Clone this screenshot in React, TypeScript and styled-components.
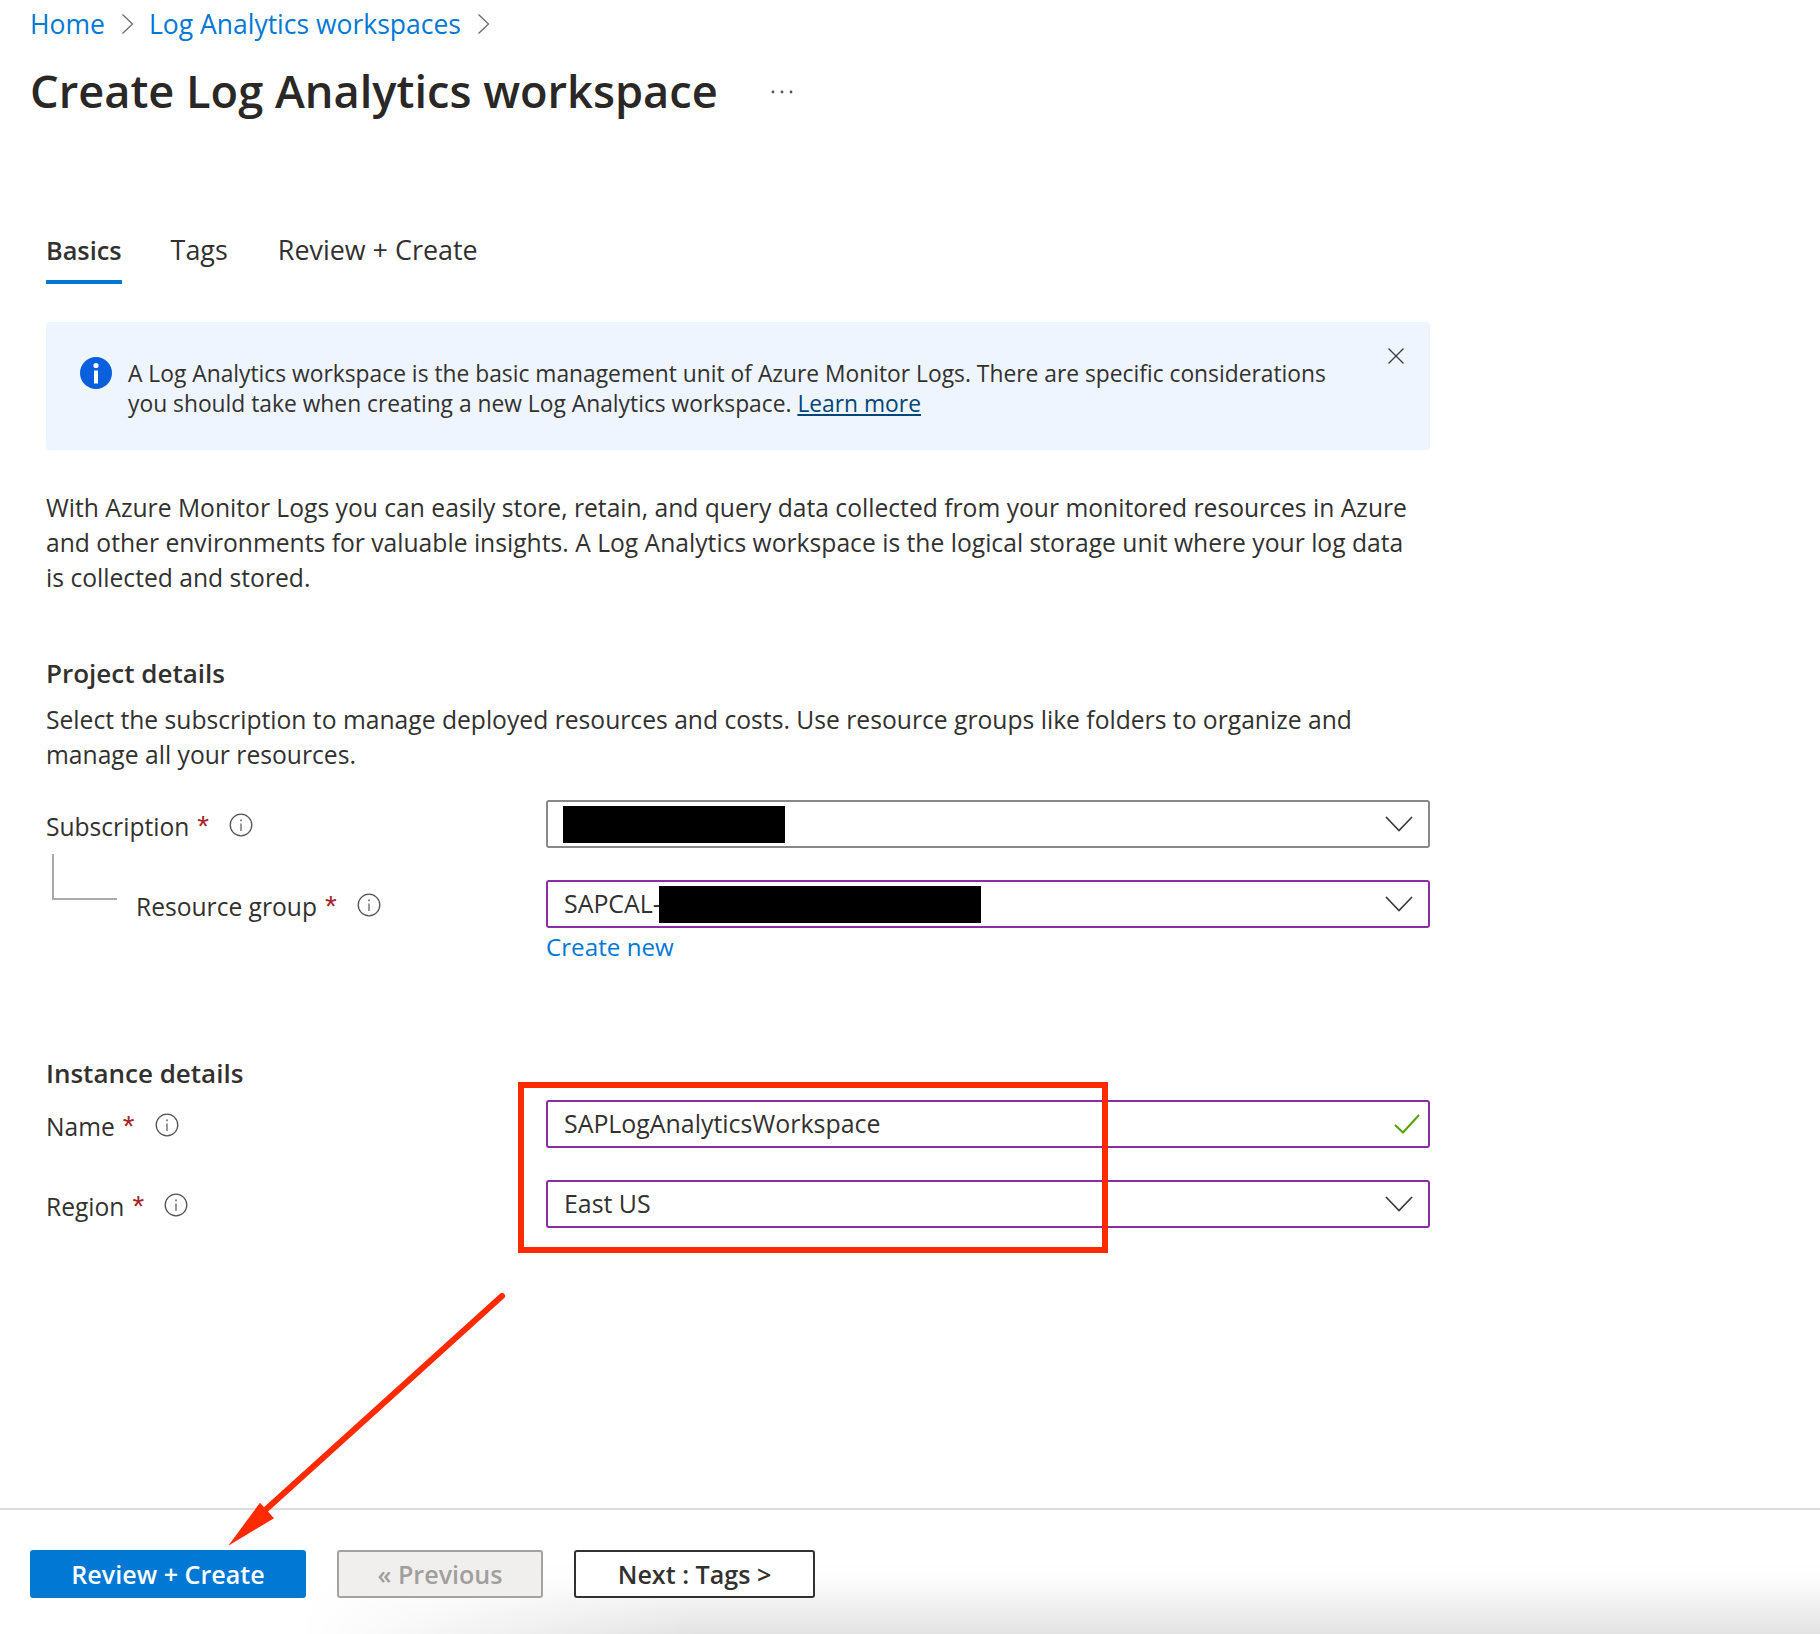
import React from 'react';
import styled, { createGlobalStyle } from 'styled-components';

const GlobalStyle = createGlobalStyle`
  html, body { margin: 0; padding: 0; background: #fff; }
  body { font-family: "Open Sans", "Noto Sans", sans-serif; color: #323130; }
  * { box-sizing: border-box; }
`;

const Page = styled.div`
  position: relative;
  width: 1820px;
  height: 1634px;
  display: flex;
  flex-direction: column;
  overflow: hidden;
  background: #fff;
`;

const Main = styled.main`
  flex: 1;
  min-height: 0;
`;

const Breadcrumbs = styled.nav`
  height: 50px;
  padding: 0 0 2px 30px;
  display: flex;
  align-items: center;
  font-size: 26.5px;
  line-height: 48px;
`;

const CrumbLink = styled.a`
  color: #0078d4;
  white-space: nowrap;
`;

const CrumbSep = styled.svg`
  width: 13px;
  height: 20px;
  margin: 0 15px 0 16px;
  flex: none;
`;

const TitleRow = styled.header`
  height: 84px;
  padding: 0 0 2px 30px;
  display: flex;
  align-items: center;
`;

const Title = styled.h1`
  margin: 0;
  font-size: 45.2px;
  font-weight: 600;
  line-height: 82px;
  color: #292827;
  white-space: nowrap;
`;

const MoreDots = styled.svg`
  width: 24px;
  height: 6px;
  margin: 2px 0 0 52px;
  flex: none;
`;

const Content = styled.div`
  padding-left: 46px;
  width: 1430px;
`;

const Tabs = styled.div`
  margin-top: 88px;
  display: flex;
  gap: 49px;
`;

const Tab = styled.div<{ $active?: boolean }>`
  height: 62px;
  font-size: ${p => (p.$active ? '25.3px' : '26.9px')};
  font-weight: ${p => (p.$active ? 600 : 400)};
  line-height: 56px;
  color: #323130;
  white-space: nowrap;
  border-bottom: 4px solid ${p => (p.$active ? '#0078d4' : 'transparent')};
  &:last-child { margin-left: 1px; }
`;

const Banner = styled.section`
  margin-top: 38px;
  height: 128px;
  background: #eef5ff;
  border-radius: 4px;
  display: flex;
  padding: 35px 26px 0 34px;
`;

const BannerIcon = styled.svg`
  width: 32px;
  height: 32px;
  margin-right: 16px;
  flex: none;
`;

const BannerText = styled.p`
  margin: 2px 0 0;
  flex: 1;
  font-size: 22.8px;
  line-height: 30px;
  color: #323130;
  white-space: nowrap;
`;

const BannerLink = styled.a`
  color: #004578;
  text-decoration: underline;
`;

const CloseIcon = styled.svg`
  width: 16px;
  height: 16px;
  margin-top: -9px;
  flex: none;
`;

const Intro = styled.p`
  margin: 40px 0 0;
  font-size: 24.66px;
  line-height: 35px;
  white-space: nowrap;
`;

const SectionHeading = styled.h2<{ $top: number }>`
  margin: ${p => p.$top}px 0 0;
  font-size: 26px;
  font-weight: 600;
  line-height: 36px;
  color: #323130;
  white-space: nowrap;
`;

const SectionText = styled.p`
  margin: 11px 0 0;
  font-size: 24.66px;
  line-height: 35px;
  white-space: nowrap;
`;

const FormGrid = styled.div<{ $top: number }>`
  margin-top: ${p => p.$top}px;
  display: grid;
  grid-template-columns: 500px 884px;
  row-gap: 32px;
`;

const LabelCell = styled.div`
  height: 48px;
  padding-top: 4px;
  display: flex;
  align-items: center;
  font-size: 24.6px;
  white-space: nowrap;
`;

const Connector = styled.span`
  width: 65px;
  height: 46px;
  margin: -30px 19px 0 6px;
  flex: none;
  align-self: flex-start;
  border-left: 2px solid #ababab;
  border-bottom: 2px solid #ababab;
`;

const Star = styled.span`
  margin: 0 0 0 8px;
  width: 17px;
  color: #a4262c;
  font-size: 30px;
  line-height: 30px;
  font-family: "Liberation Sans", sans-serif;
`;

const InfoIcon = styled.svg`
  width: 24px;
  height: 24px;
  margin: -2px 0 0 15px;
  flex: none;
`;

const FieldCell = styled.div`
  display: flex;
  flex-direction: column;
`;

const Field = styled.div<{ $focused?: boolean }>`
  height: 48px;
  padding: 0 14px 0 16px;
  display: flex;
  align-items: center;
  background: #fff;
  border: 2px solid ${p => (p.$focused ? '#8a2da5' : '#8a8886')};
  border-radius: 3px;
  font-size: 24.9px;
  color: #323130;
  white-space: nowrap;
`;

const FieldValue = styled.span`
  flex: 1;
  display: flex;
  align-items: center;
  min-width: 0;
  padding-bottom: 2px;
`;

const Redaction = styled.span<{ $w: number; $offset: number }>`
  display: block;
  width: ${p => p.$w}px;
  height: 37px;
  margin-bottom: -2px;
  margin-left: ${p => p.$offset}px;
  background: #000;
  flex: none;
`;

const Chevron = styled.svg`
  width: 28px;
  height: 16px;
  margin-right: 1px;
  flex: none;
`;

const CheckMark = styled.svg`
  width: 26px;
  height: 20px;
  margin-right: -6px;
  flex: none;
`;

const CreateNew = styled.a`
  margin-top: 4px;
  height: 30px;
  font-size: 24.2px;
  line-height: 30px;
  color: #0078d4;
`;

const Footer = styled.footer`
  height: 126px;
  flex: none;
  border-top: 2px solid #dcdcdc;
  padding: 40px 0 0 30px;
  display: flex;
  align-items: flex-start;
  gap: 31px;
  background:
    linear-gradient(to right, #fff 300px, rgba(255, 255, 255, 0) 700px),
    linear-gradient(to bottom, #fff 0, #fff 42%, #fcfcfc 58%, #f3f3f3 72%, #ebebeb 86%, #e3e3e3 100%);
`;

const Button = styled.button<{ $kind: 'primary' | 'disabled' | 'outline'; $w: number }>`
  width: ${p => p.$w}px;
  height: 48px;
  padding: 0;
  border-radius: 3px;
  font-family: "Open Sans", "Noto Sans", sans-serif;
  font-size: 25.1px;
  font-weight: 600;
  line-height: 44px;
  white-space: nowrap;
  color: ${p => (p.$kind === 'primary' ? '#fff' : p.$kind === 'disabled' ? '#a19f9d' : '#323130')};
  background: ${p => (p.$kind === 'primary' ? '#0078d4' : p.$kind === 'disabled' ? '#f0efee' : '#fff')};
  border: 2px solid ${p => (p.$kind === 'primary' ? '#0078d4' : p.$kind === 'disabled' ? '#a3a2a0' : '#323130')};
`;

const RedBox = styled.div`
  position: absolute;
  left: 518px;
  top: 1082px;
  width: 590px;
  height: 171px;
  border: 6px solid #ff2a00;
  pointer-events: none;
`;

const ArrowLayer = styled.svg`
  position: absolute;
  left: 220px;
  top: 1290px;
  width: 290px;
  height: 260px;
  pointer-events: none;
`;

const Sep = () => (
  <CrumbSep viewBox="0 0 13 20" fill="none" stroke="#6b6a69" strokeWidth="1.3">
    <path d="M1.5 0.5 L11.5 10 L1.5 19.5" />
  </CrumbSep>
);

const Info = () => (
  <InfoIcon viewBox="0 0 24 24" fill="none" stroke="#555453">
    <circle cx="12" cy="12" r="10.8" strokeWidth="1.3" />
    <path d="M12 10.5 V18" strokeWidth="1.2" />
    <path d="M12 6.6 V8.2" strokeWidth="1.4" />
  </InfoIcon>
);

const Down = () => (
  <Chevron viewBox="0 0 28 16" fill="none" stroke="#3b3a39" strokeWidth="1.7">
    <path d="M1 1 L14 14.5 L27 1" />
  </Chevron>
);

const Label = ({ text, tree }: { text: string; tree?: boolean }) => (
  <LabelCell>
    {tree && <Connector />}
    {text}
    <Star>*</Star>
    <Info />
  </LabelCell>
);

export default function App() {
  return (
    <Page>
      <GlobalStyle />
      <Main>
        <Breadcrumbs>
          <CrumbLink>Home</CrumbLink>
          <Sep />
          <CrumbLink>Log Analytics workspaces</CrumbLink>
          <Sep />
        </Breadcrumbs>
        <TitleRow>
          <Title>Create Log Analytics workspace</Title>
          <MoreDots viewBox="0 0 24 6" fill="#555">
            <circle cx="3" cy="3" r="1.4" />
            <circle cx="12" cy="3" r="1.4" />
            <circle cx="21" cy="3" r="1.4" />
          </MoreDots>
        </TitleRow>
        <Content>
          <Tabs>
            <Tab $active>Basics</Tab>
            <Tab>Tags</Tab>
            <Tab>Review + Create</Tab>
          </Tabs>
          <Banner>
            <BannerIcon viewBox="0 0 32 32">
              <circle cx="16" cy="16" r="16" fill="#0a5fdc" />
              <circle cx="16" cy="8.5" r="2.6" fill="#fff" />
              <rect x="14" y="13.5" width="4" height="13" fill="#fff" />
            </BannerIcon>
            <BannerText>
              A Log Analytics workspace is the basic management unit of Azure Monitor Logs. There are specific considerations
              <br />
              you should take when creating a new Log Analytics workspace. <BannerLink>Learn more</BannerLink>
            </BannerText>
            <CloseIcon viewBox="0 0 16 16" fill="none" stroke="#3b3a39" strokeWidth="1.3">
              <path d="M0.5 0.5 L15.5 15.5 M15.5 0.5 L0.5 15.5" />
            </CloseIcon>
          </Banner>
          <Intro>
            With Azure Monitor Logs you can easily store, retain, and query data collected from your monitored resources in Azure
            <br />
            and other environments for valuable insights. A Log Analytics workspace is the logical storage unit where your log data
            <br />
            is collected and stored.
          </Intro>
          <SectionHeading $top={60}>Project details</SectionHeading>
          <SectionText>
            Select the subscription to manage deployed resources and costs. Use resource groups like folders to organize and
            <br />
            manage all your resources.
          </SectionText>
          <FormGrid $top={28}>
            <Label text="Subscription" />
            <FieldCell>
              <Field>
                <FieldValue>
                  <Redaction $w={222} $offset={-1} />
                </FieldValue>
                <Down />
              </Field>
            </FieldCell>
            <Label text="Resource group" tree />
            <FieldCell>
              <Field $focused>
                <FieldValue>
                  SAPCAL-
                  <Redaction $w={322} $offset={-2} />
                </FieldValue>
                <Down />
              </Field>
              <CreateNew>Create new</CreateNew>
            </FieldCell>
          </FormGrid>
          <SectionHeading $top={93}>Instance details</SectionHeading>
          <FormGrid $top={9}>
            <Label text="Name" />
            <FieldCell>
              <Field $focused>
                <FieldValue>SAPLogAnalyticsWorkspace</FieldValue>
                <CheckMark viewBox="0 0 26 20" fill="none" stroke="#57a300" strokeWidth="2">
                  <path d="M1 11 L9 18.5 L25 1" />
                </CheckMark>
              </Field>
            </FieldCell>
            <Label text="Region" />
            <FieldCell>
              <Field $focused>
                <FieldValue>East US</FieldValue>
                <Down />
              </Field>
            </FieldCell>
          </FormGrid>
        </Content>
      </Main>
      <Footer>
        <Button $kind="primary" $w={276}>Review + Create</Button>
        <Button $kind="disabled" $w={206}>« Previous</Button>
        <Button $kind="outline" $w={241}>Next : Tags &gt;</Button>
      </Footer>
      <RedBox />
      <ArrowLayer viewBox="220 1290 290 260">
        <path d="M502 1296 L262 1513" stroke="#ff2a00" strokeWidth="6" strokeLinecap="round" fill="none" />
        <path d="M228.3 1545.7 L260 1502.7 L274 1518.3 Z" fill="#ff2a00" />
      </ArrowLayer>
    </Page>
  );
}
